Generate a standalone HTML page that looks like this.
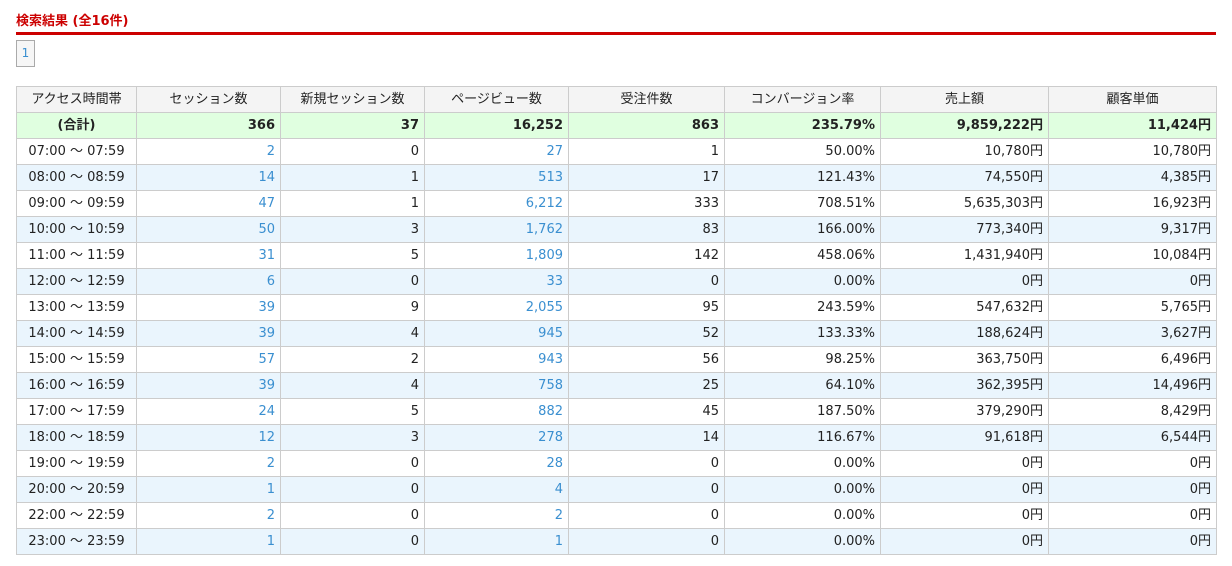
<!DOCTYPE html>
<html><head><meta charset="utf-8"><style>
body{margin:0;background:#fff;font-family:"DejaVu Sans","Noto Sans CJK JP",sans-serif;font-size:13px;color:#222;}
.t{position:absolute;left:16px;top:10px;color:#c00;font-weight:bold;font-size:13px;}
.line{position:absolute;left:16px;top:32px;width:1200px;height:3px;background:#c00;}
.pg{position:absolute;left:16px;top:40px;width:17px;height:25px;border:1px solid #aaa;background:#f6f6f6;color:#3a8fd0;font-size:12px;line-height:25px;text-align:center;}
table{position:absolute;left:16px;top:86px;border-collapse:collapse;table-layout:fixed;width:1201px;}
td,th{border:1px solid #ccc;height:25px;padding:0 5px;text-align:right;font-weight:normal;white-space:nowrap;line-height:25px;}
th{background:#f4f4f4;text-align:center;}
td:first-child{text-align:center;}
tr.s td{background:#e0ffe0;font-weight:bold;}
tr.a td{background:#eaf5fd;}
a{color:#3a8fd0;text-decoration:none;}
.y{position:relative;top:0;}
</style></head><body>
<div class="t">検索結果 (全16件)</div>
<div class="line"></div>
<div class="pg">1</div>
<table>
<colgroup><col style="width:120px"><col style="width:144px"><col style="width:144px"><col style="width:144px"><col style="width:156px"><col style="width:156px"><col style="width:168px"><col style="width:168px"></colgroup>
<tr><th>アクセス時間帯</th><th>セッション数</th><th>新規セッション数</th><th>ページビュー数</th><th>受注件数</th><th>コンバージョン率</th><th>売上額</th><th>顧客単価</th></tr>
<tr class="s"><td>(合計)</td><td>366</td><td>37</td><td>16,252</td><td>863</td><td>235.79%</td><td>9,859,222<span class="y">円</span></td><td>11,424<span class="y">円</span></td></tr>
<tr><td>07:00 <span class="y">～</span> 07:59</td><td><a>2</a></td><td>0</td><td><a>27</a></td><td>1</td><td>50.00%</td><td>10,780<span class="y">円</span></td><td>10,780<span class="y">円</span></td></tr>
<tr class="a"><td>08:00 <span class="y">～</span> 08:59</td><td><a>14</a></td><td>1</td><td><a>513</a></td><td>17</td><td>121.43%</td><td>74,550<span class="y">円</span></td><td>4,385<span class="y">円</span></td></tr>
<tr><td>09:00 <span class="y">～</span> 09:59</td><td><a>47</a></td><td>1</td><td><a>6,212</a></td><td>333</td><td>708.51%</td><td>5,635,303<span class="y">円</span></td><td>16,923<span class="y">円</span></td></tr>
<tr class="a"><td>10:00 <span class="y">～</span> 10:59</td><td><a>50</a></td><td>3</td><td><a>1,762</a></td><td>83</td><td>166.00%</td><td>773,340<span class="y">円</span></td><td>9,317<span class="y">円</span></td></tr>
<tr><td>11:00 <span class="y">～</span> 11:59</td><td><a>31</a></td><td>5</td><td><a>1,809</a></td><td>142</td><td>458.06%</td><td>1,431,940<span class="y">円</span></td><td>10,084<span class="y">円</span></td></tr>
<tr class="a"><td>12:00 <span class="y">～</span> 12:59</td><td><a>6</a></td><td>0</td><td><a>33</a></td><td>0</td><td>0.00%</td><td>0<span class="y">円</span></td><td>0<span class="y">円</span></td></tr>
<tr><td>13:00 <span class="y">～</span> 13:59</td><td><a>39</a></td><td>9</td><td><a>2,055</a></td><td>95</td><td>243.59%</td><td>547,632<span class="y">円</span></td><td>5,765<span class="y">円</span></td></tr>
<tr class="a"><td>14:00 <span class="y">～</span> 14:59</td><td><a>39</a></td><td>4</td><td><a>945</a></td><td>52</td><td>133.33%</td><td>188,624<span class="y">円</span></td><td>3,627<span class="y">円</span></td></tr>
<tr><td>15:00 <span class="y">～</span> 15:59</td><td><a>57</a></td><td>2</td><td><a>943</a></td><td>56</td><td>98.25%</td><td>363,750<span class="y">円</span></td><td>6,496<span class="y">円</span></td></tr>
<tr class="a"><td>16:00 <span class="y">～</span> 16:59</td><td><a>39</a></td><td>4</td><td><a>758</a></td><td>25</td><td>64.10%</td><td>362,395<span class="y">円</span></td><td>14,496<span class="y">円</span></td></tr>
<tr><td>17:00 <span class="y">～</span> 17:59</td><td><a>24</a></td><td>5</td><td><a>882</a></td><td>45</td><td>187.50%</td><td>379,290<span class="y">円</span></td><td>8,429<span class="y">円</span></td></tr>
<tr class="a"><td>18:00 <span class="y">～</span> 18:59</td><td><a>12</a></td><td>3</td><td><a>278</a></td><td>14</td><td>116.67%</td><td>91,618<span class="y">円</span></td><td>6,544<span class="y">円</span></td></tr>
<tr><td>19:00 <span class="y">～</span> 19:59</td><td><a>2</a></td><td>0</td><td><a>28</a></td><td>0</td><td>0.00%</td><td>0<span class="y">円</span></td><td>0<span class="y">円</span></td></tr>
<tr class="a"><td>20:00 <span class="y">～</span> 20:59</td><td><a>1</a></td><td>0</td><td><a>4</a></td><td>0</td><td>0.00%</td><td>0<span class="y">円</span></td><td>0<span class="y">円</span></td></tr>
<tr><td>22:00 <span class="y">～</span> 22:59</td><td><a>2</a></td><td>0</td><td><a>2</a></td><td>0</td><td>0.00%</td><td>0<span class="y">円</span></td><td>0<span class="y">円</span></td></tr>
<tr class="a"><td>23:00 <span class="y">～</span> 23:59</td><td><a>1</a></td><td>0</td><td><a>1</a></td><td>0</td><td>0.00%</td><td>0<span class="y">円</span></td><td>0<span class="y">円</span></td></tr>
</table>
</body></html>
